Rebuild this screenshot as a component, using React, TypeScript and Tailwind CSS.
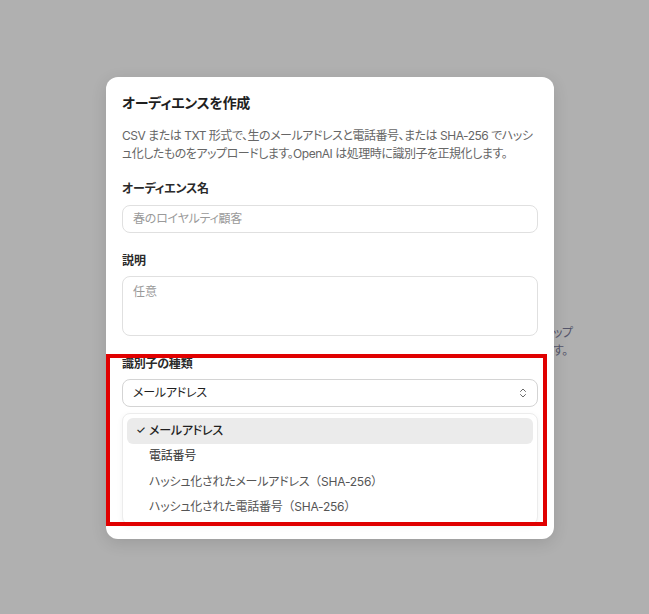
import React from 'react';
import { ChevronsUpDown } from 'lucide-react';

const font = "font-['Inter','Noto_Sans_CJK_JP',sans-serif] [font-feature-settings:'palt']";

const options = [
  { label: 'メールアドレス' },
  { label: '電話番号' },
  { label: 'ハッシュ化されたメールアドレス', hash: true },
  { label: 'ハッシュ化された電話番号', hash: true },
];

export default function App() {
  return (
    <div className={`relative flex h-[614px] w-[649px] items-start overflow-hidden bg-[#b0b0b0] pl-[106px] pt-[77px] ${font}`}>
      {/* page text peeking out behind the overlay */}
      <div className="absolute left-[553px] top-[324px] text-xs leading-[18px] tracking-[-0.04em] text-[#55556a]">
        <div>ップ</div>
        <div>す。</div>
      </div>

      <div className="relative flex w-[448px] flex-col rounded-xl bg-white px-4 pb-[14px] pt-4 shadow-[0_4px_16px_rgba(0,0,0,0.12)]">
        <h2 className="text-[14px] font-semibold leading-5 tracking-[-0.02em] text-[#1f1f1f]">オーディエンスを作成</h2>
        <p className="mt-3.5 text-xs leading-[18px] tracking-[-0.04em] text-[#666]">
          CSV または TXT 形式で、生のメールアドレスと電話番号、または SHA-256 でハッシュ化したものをアップロードします。OpenAI は処理時に識別子を正規化します。
        </p>

        <label className="mt-[18px] text-xs font-semibold leading-4 tracking-[-0.02em] text-[#2a2a2a]">オーディエンス名</label>
        <div className="mt-2 flex h-7 items-center rounded-lg border border-[#e0e0e0] px-2.5 text-xs tracking-[-0.02em] text-[#9a9a9a]">
          春のロイヤルティ顧客
        </div>

        <label className="mt-5 text-xs font-semibold leading-4 text-[#2a2a2a]">説明</label>
        <div className="mt-[7px] h-[60px] rounded-lg border border-[#e0e0e0] px-2.5 py-[7px] text-xs leading-4 text-[#9a9a9a]">
          任意
        </div>

        <label className="mt-5 text-xs font-semibold leading-4 tracking-[-0.02em] text-[#2a2a2a]">識別子の種類</label>
        <div className="mt-[7px] flex h-7 items-center justify-between rounded-lg border border-[#d4d4d4] pl-2.5 pr-2 text-xs tracking-[-0.02em] text-[#1f1f1f]">
          <span>メールアドレス</span>
          <ChevronsUpDown className="h-3 w-3 text-[#555]" strokeWidth={1.75} />
        </div>

        <ul className="mt-1.5 flex flex-col rounded-lg border border-[#ececec] bg-white p-1 shadow-[0_2px_6px_rgba(0,0,0,0.05)]">
          {options.map((o, i) => (
            <li
              key={o.label}
              className={`relative flex h-[25.5px] items-center rounded-md pl-[22px] text-xs tracking-[-0.02em] ${
                i === 0 ? 'bg-[#ebebeb] font-medium text-[#1f1f1f]' : i === 1 ? 'text-[#333]' : 'text-[#555]'
              }`}
            >
              {i === 0 && <span className="absolute left-[9px] text-[11px]">✓</span>}
              {o.label}
              {o.hash && <span className="[font-feature-settings:normal]">（SHA-256）</span>}
            </li>
          ))}
        </ul>
      </div>

      {/* annotation box */}
      <div className="pointer-events-none absolute left-[106px] top-[354px] h-[172px] w-[441px] border-4 border-[#e00000]" />
    </div>
  );
}
